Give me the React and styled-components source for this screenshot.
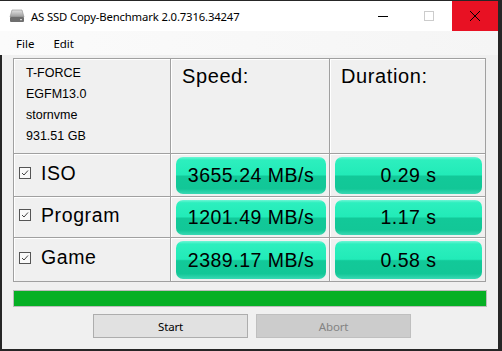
import React from "react";
import styled, { createGlobalStyle } from "styled-components";

const GlobalStyle = createGlobalStyle`
  html, body {
    margin: 0;
    padding: 0;
    background: #262626;
    width: 502px;
    height: 351px;
    overflow: hidden;
  }
`;

const Window = styled.div`
  margin-top: 1px;
  width: 498px;
  height: 348px;
  display: flex;
  flex-direction: column;
  background: #f0f0f0;
`;

const TitleBar = styled.div`
  height: 30px;
  background: #fff;
  display: flex;
  align-items: center;
  font-family: "Noto Sans", "Open Sans", sans-serif;
  font-size: 11.3px;
  color: #000;
`;

const AppIcon = styled.svg`
  margin-left: 9px;
  margin-right: 6px;
  width: 16px;
  height: 14px;
`;

const Title = styled.div`
  flex: 1;
  letter-spacing: -0.15px;
`;

const WinButton = styled.div`
  width: 46px;
  height: 30px;
  display: flex;
  align-items: center;
  justify-content: center;
  background: ${p => (p.close ? "#e81123" : "transparent")};
`;

const MenuBar = styled.div`
  height: 24px;
  background: linear-gradient(to right, #fbfbfb, #f5f5f5);
  display: flex;
  align-items: center;
  padding-left: 9px;
  font-family: "Noto Sans", "Open Sans", sans-serif;
  font-size: 11.5px;
`;

const MenuItem = styled.span`
  padding: 0 7px;
  margin-right: 5px;
`;

const Content = styled.div`
  flex: 1;
  border-left: 2px solid #262626;
  padding: 3px 0 0 11px;
  font-family: "Liberation Sans", Arial, sans-serif;
  color: #000;
`;

const Table = styled.div`
  display: grid;
  grid-template-columns: 156px 158px 155px;
  grid-template-rows: 94px 42px 40px 43px;
  gap: 1px;
  width: 471px;
  background: #a0a0a0;
  border: 1px solid #a0a0a0;
`;

const Cell = styled.div`
  background: #f0f0f0;
  box-shadow: inset 1px 1px 0 #fff;
  display: flex;
  min-width: 0;
`;

const InfoCell = styled(Cell)`
  flex-direction: column;
  padding: 4px 0 0 12px;
  font-size: 12.5px;
  line-height: 21px;
`;

const HeadCell = styled(Cell)`
  padding: 5px 0 0 11px;
  font-size: 20px;
  letter-spacing: 0.6px;
  line-height: 24px;
`;

const LabelCell = styled(Cell)`
  align-items: center;
  padding: 0 0 4px 5px;
  font-size: 19.5px;
  letter-spacing: 0.6px;
`;

const Check = styled.span`
  width: 10px;
  height: 10px;
  border: 1px solid #555;
  background: #fafafa;
  display: flex;
  align-items: center;
  justify-content: center;
  margin-right: 10px;
`;

const ValueCell = styled(Cell)`
  padding: 3px 3px 2px 5px;
`;

const Value = styled.div`
  flex: 1;
  border-radius: 7px;
  display: flex;
  align-items: center;
  justify-content: center;
  font-size: 19.5px;
  letter-spacing: 0.5px;
  background: linear-gradient(
    to bottom,
    #6ff6d6 0%,
    #2defbe 8%,
    #22ebb8 48%,
    #12c999 52%,
    #12c797 86%,
    #3ad9b4 100%
  );
`;

const Progress = styled.div`
  margin-top: 8px;
  width: 472px;
  height: 15px;
  border: 1px solid #bcbcbc;
  background: #06b025;
`;

const ButtonRow = styled.div`
  display: flex;
  gap: 8px;
  margin-top: 7px;
  padding-left: 80px;
`;

const Button = styled.div`
  width: 153px;
  height: 22px;
  display: flex;
  align-items: center;
  justify-content: center;
  font-family: "Noto Sans", "Open Sans", sans-serif;
  font-size: 11.5px;
  letter-spacing: -0.2px;
  background: ${p => (p.disabled ? "#cccccc" : "#e1e1e1")};
  border: 1px solid ${p => (p.disabled ? "#bfbfbf" : "#adadad")};
  color: ${p => (p.disabled ? "#838383" : "#000")};
`;

const rows = [
  { name: "ISO", speed: "3655.24 MB/s", time: "0.29 s" },
  { name: "Program", speed: "1201.49 MB/s", time: "1.17 s" },
  { name: "Game", speed: "2389.17 MB/s", time: "0.58 s" }
];

const CheckMark = () => (
  <Check>
    <svg width="8" height="8" viewBox="0 0 8 8">
      <path d="M1 4 L3 6 L7 1.5" fill="none" stroke="#444" strokeWidth="1" />
    </svg>
  </Check>
);

export default function App() {
  return (
    <>
      <GlobalStyle />
      <Window>
        <TitleBar>
          <AppIcon viewBox="0 0 16 14">
            <defs>
              <linearGradient id="drv" x1="0" y1="0" x2="0" y2="1">
                <stop offset="0" stopColor="#e4e4e4" />
                <stop offset="1" stopColor="#9a9a9a" />
              </linearGradient>
            </defs>
            <path d="M3 1 H13 L15 8 H1 Z" fill="url(#drv)" stroke="#8a8a8a" strokeWidth="0.6" />
            <rect x="1" y="8" width="14" height="5" rx="1" fill="#6e6e6e" />
            <rect x="11" y="10" width="2" height="1.2" fill="#d0d0d0" />
          </AppIcon>
          <Title>AS SSD Copy-Benchmark 2.0.7316.34247</Title>
          <WinButton>
            <svg width="10" height="10" viewBox="0 0 10 10">
              <rect x="0" y="5" width="10" height="1" fill="#000" />
            </svg>
          </WinButton>
          <WinButton>
            <svg width="10" height="10" viewBox="0 0 10 10">
              <rect x="0.5" y="0.5" width="9" height="9" fill="none" stroke="#cccccc" />
            </svg>
          </WinButton>
          <WinButton close>
            <svg width="10" height="10" viewBox="0 0 10 10">
              <path d="M0 0 L10 10 M10 0 L0 10" stroke="#000" strokeWidth="1" />
            </svg>
          </WinButton>
        </TitleBar>
        <MenuBar>
          <MenuItem>File</MenuItem>
          <MenuItem>Edit</MenuItem>
        </MenuBar>
        <Content>
          <Table>
            <InfoCell>
              <span>T-FORCE</span>
              <span>EGFM13.0</span>
              <span>stornvme</span>
              <span>931.51 GB</span>
            </InfoCell>
            <HeadCell>Speed:</HeadCell>
            <HeadCell>Duration:</HeadCell>
            {rows.map(r => (
              <React.Fragment key={r.name}>
                <LabelCell>
                  <CheckMark />
                  {r.name}
                </LabelCell>
                <ValueCell>
                  <Value>{r.speed}</Value>
                </ValueCell>
                <ValueCell>
                  <Value>{r.time}</Value>
                </ValueCell>
              </React.Fragment>
            ))}
          </Table>
          <Progress />
          <ButtonRow>
            <Button>Start</Button>
            <Button disabled>Abort</Button>
          </ButtonRow>
        </Content>
      </Window>
    </>
  );
}
